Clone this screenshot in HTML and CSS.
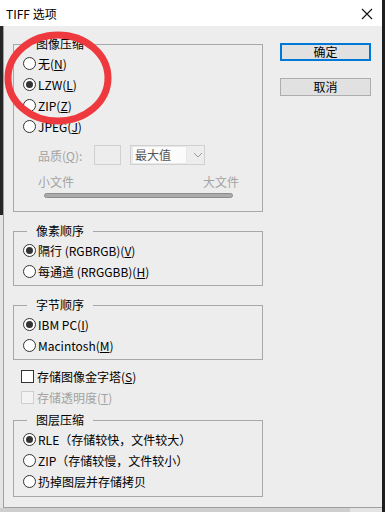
FILE: index.html
```html
<!DOCTYPE html>
<html lang="zh-CN">
<head>
    <meta charset="UTF-8">
    <title>TIFF 选项</title>
    <link rel="stylesheet" href="styles.css">
</head>
<body>
    <div class="window">
        <div class="titlebar">
            <span class="title">TIFF 选项</span>
            <svg class="close" width="12" height="12" viewBox="0 0 12 12">
                <path d="M1 1 L11 11 M11 1 L1 11" stroke="#111" stroke-width="1.1" fill="none"/>
            </svg>
        </div>

        <div class="client">
            <div class="main">
                <fieldset class="group">
                    <legend>图像压缩</legend>
                    <div class="row"><span class="radio"></span>无(<u>N</u>)</div>
                    <div class="row"><span class="radio on"></span>LZW(<u>L</u>)</div>
                    <div class="row"><span class="radio"></span>ZIP(<u>Z</u>)</div>
                    <div class="row"><span class="radio"></span>JPEG(<u>J</u>)</div>

                    <div class="quality">
                        <span class="q-label">品质(<u>Q</u>):</span>
                        <span class="q-input"></span>
                        <span class="q-select">
                            <span class="q-value">最大值</span>
                            <svg width="10" height="6" viewBox="0 0 10 6">
                                <path d="M1 1 L5 5 L9 1" stroke="#9a9a9a" stroke-width="1" fill="none"/>
                            </svg>
                        </span>
                    </div>
                    <div class="scale">
                        <span>小文件</span>
                        <span>大文件</span>
                    </div>
                    <div class="track"></div>
                </fieldset>

                <fieldset class="group">
                    <legend>像素顺序</legend>
                    <div class="row"><span class="radio on"></span>隔行 (RGBRGB)(<u>V</u>)</div>
                    <div class="row"><span class="radio"></span>每通道 (RRGGBB)(<u>H</u>)</div>
                </fieldset>

                <fieldset class="group">
                    <legend>字节顺序</legend>
                    <div class="row"><span class="radio on"></span>IBM PC(<u>I</u>)</div>
                    <div class="row"><span class="radio"></span>Macintosh(<u>M</u>)</div>
                </fieldset>

                <div class="checks">
                    <div class="row"><span class="check"></span>存储图像金字塔(<u>S</u>)</div>
                    <div class="row disabled"><span class="check"></span>存储透明度(<u>T</u>)</div>
                </div>

                <fieldset class="group last">
                    <legend>图层压缩</legend>
                    <div class="row"><span class="radio on"></span>RLE（存储较快，文件较大）</div>
                    <div class="row"><span class="radio"></span>ZIP（存储较慢，文件较小）</div>
                    <div class="row"><span class="radio"></span>扔掉图层并存储拷贝</div>
                </fieldset>
            </div>

            <div class="actions">
                <button class="btn default">确定</button>
                <button class="btn">取消</button>
            </div>
        </div>

        <div class="below"></div>
    </div>

    <!-- red marker drawn over the compression options -->
    <svg class="marker" width="120" height="105" viewBox="0 0 120 105">
        <ellipse cx="58" cy="50" rx="50" ry="43" stroke="#ee3a3f" stroke-width="7" fill="none"/>
    </svg>
</body>
</html>
```

FILE: styles.css
```css
body {
    margin: 0;
    width: 385px;
    height: 512px;
    overflow: hidden;
    position: relative;
    background: #1e1e1e;
    font-family: "Noto Sans CJK SC", "Noto Sans", sans-serif;
    font-size: 12px;
    color: #000;
}
.window {
    width: 382px;
    background: linear-gradient(to bottom, #262626 215px, #e4e4e4 215px);
}
.titlebar {
    height: 26px;
    background: #fff;
    display: flex;
    align-items: center;
    justify-content: space-between;
    padding: 0 9px 0 6px;
}
.title {
    font-size: 12px;
    line-height: 16px;
    margin-top: 1px;
}
.close {
    margin-top: 1px;
}
.client {
    height: 471px;
    margin-left: 3px;
    border-left: 1px solid #a0a0a0;
    border-bottom: 1px solid #a0a0a0;
    background: #ededed;
    display: flex;
    gap: 17px;
    padding: 10px 0 0 9px;
}
.main {
    width: 250px;
}
.group {
    margin: 0 0 11px 0;
    padding: 1px 0 3px 9px;
    border: 1px solid #a8a8a8;
    min-width: 0;
}
.group legend {
    margin-left: 4px;
    padding: 0 9px;
    line-height: 16px;
}
.group:first-child {
    padding-bottom: 13px;
}
.group.last {
    margin: 4px 0 0 0;
    padding-bottom: 4px;
}
.row {
    height: 21px;
    display: flex;
    align-items: center;
    white-space: nowrap;
}
.radio {
    width: 11px;
    height: 11px;
    border: 1px solid #333;
    border-radius: 50%;
    background: #fff;
    margin-right: 2px;
    display: flex;
    align-items: center;
    justify-content: center;
    flex: none;
}
.radio.on::after {
    content: "";
    width: 7px;
    height: 7px;
    border-radius: 50%;
    background: #333;
}
.quality {
    margin-top: 8px;
    height: 20px;
    padding-left: 15px;
    display: flex;
    align-items: center;
    color: #a3a3a3;
}
.q-label {
    width: 56px;
}
.q-input {
    width: 25px;
    height: 18px;
    border: 1px solid #d0d0d0;
    margin-right: 9px;
}
.q-select {
    width: 73px;
    height: 18px;
    border: 1px solid #d0d0d0;
    display: flex;
    align-items: center;
}
.q-value {
    width: 52px;
    height: 16px;
    margin-left: 1px;
    background: #fbfbfb;
    border: 1px solid #e8e8e8;
    color: #555;
    line-height: 16px;
    padding-left: 2px;
    box-sizing: border-box;
    width: 55px;
    height: 18px;
}
.q-select svg {
    margin-left: 6px;
}
.scale {
    margin-top: 9px;
    padding-left: 15px;
    width: 201px;
    display: flex;
    justify-content: space-between;
    line-height: 15px;
    color: #a3a3a3;
}
.track {
    margin: 4px 0 0 21px;
    width: 187px;
    height: 3px;
    border: 1px solid #8c8c8c;
    border-radius: 3px;
    background: #ababab;
}
.checks {
    margin-top: -5px;
    padding-left: 8px;
}
.check {
    width: 11px;
    height: 11px;
    border: 1px solid #333;
    background: #fff;
    margin-right: 3px;
    flex: none;
}
.disabled {
    color: #a3a3a3;
}
.disabled .check {
    border-color: #cfcfcf;
    background: #f3f3f3;
}
.actions {
    padding-top: 7px;
    display: flex;
    flex-direction: column;
    gap: 17px;
}
.btn {
    width: 91px;
    height: 18px;
    padding: 0;
    font: inherit;
    font-size: 12px;
    line-height: 14px;
    background: #e1e1e1;
    border: 1px solid #adadad;
    color: #000;
}
.btn.default {
    border: 2px solid #0078d7;
}
.below {
    height: 4px;
    width: 350px;
    background: #cfcfcf;
}
.marker {
    position: absolute;
    left: 0;
    top: 28px;
}
```
